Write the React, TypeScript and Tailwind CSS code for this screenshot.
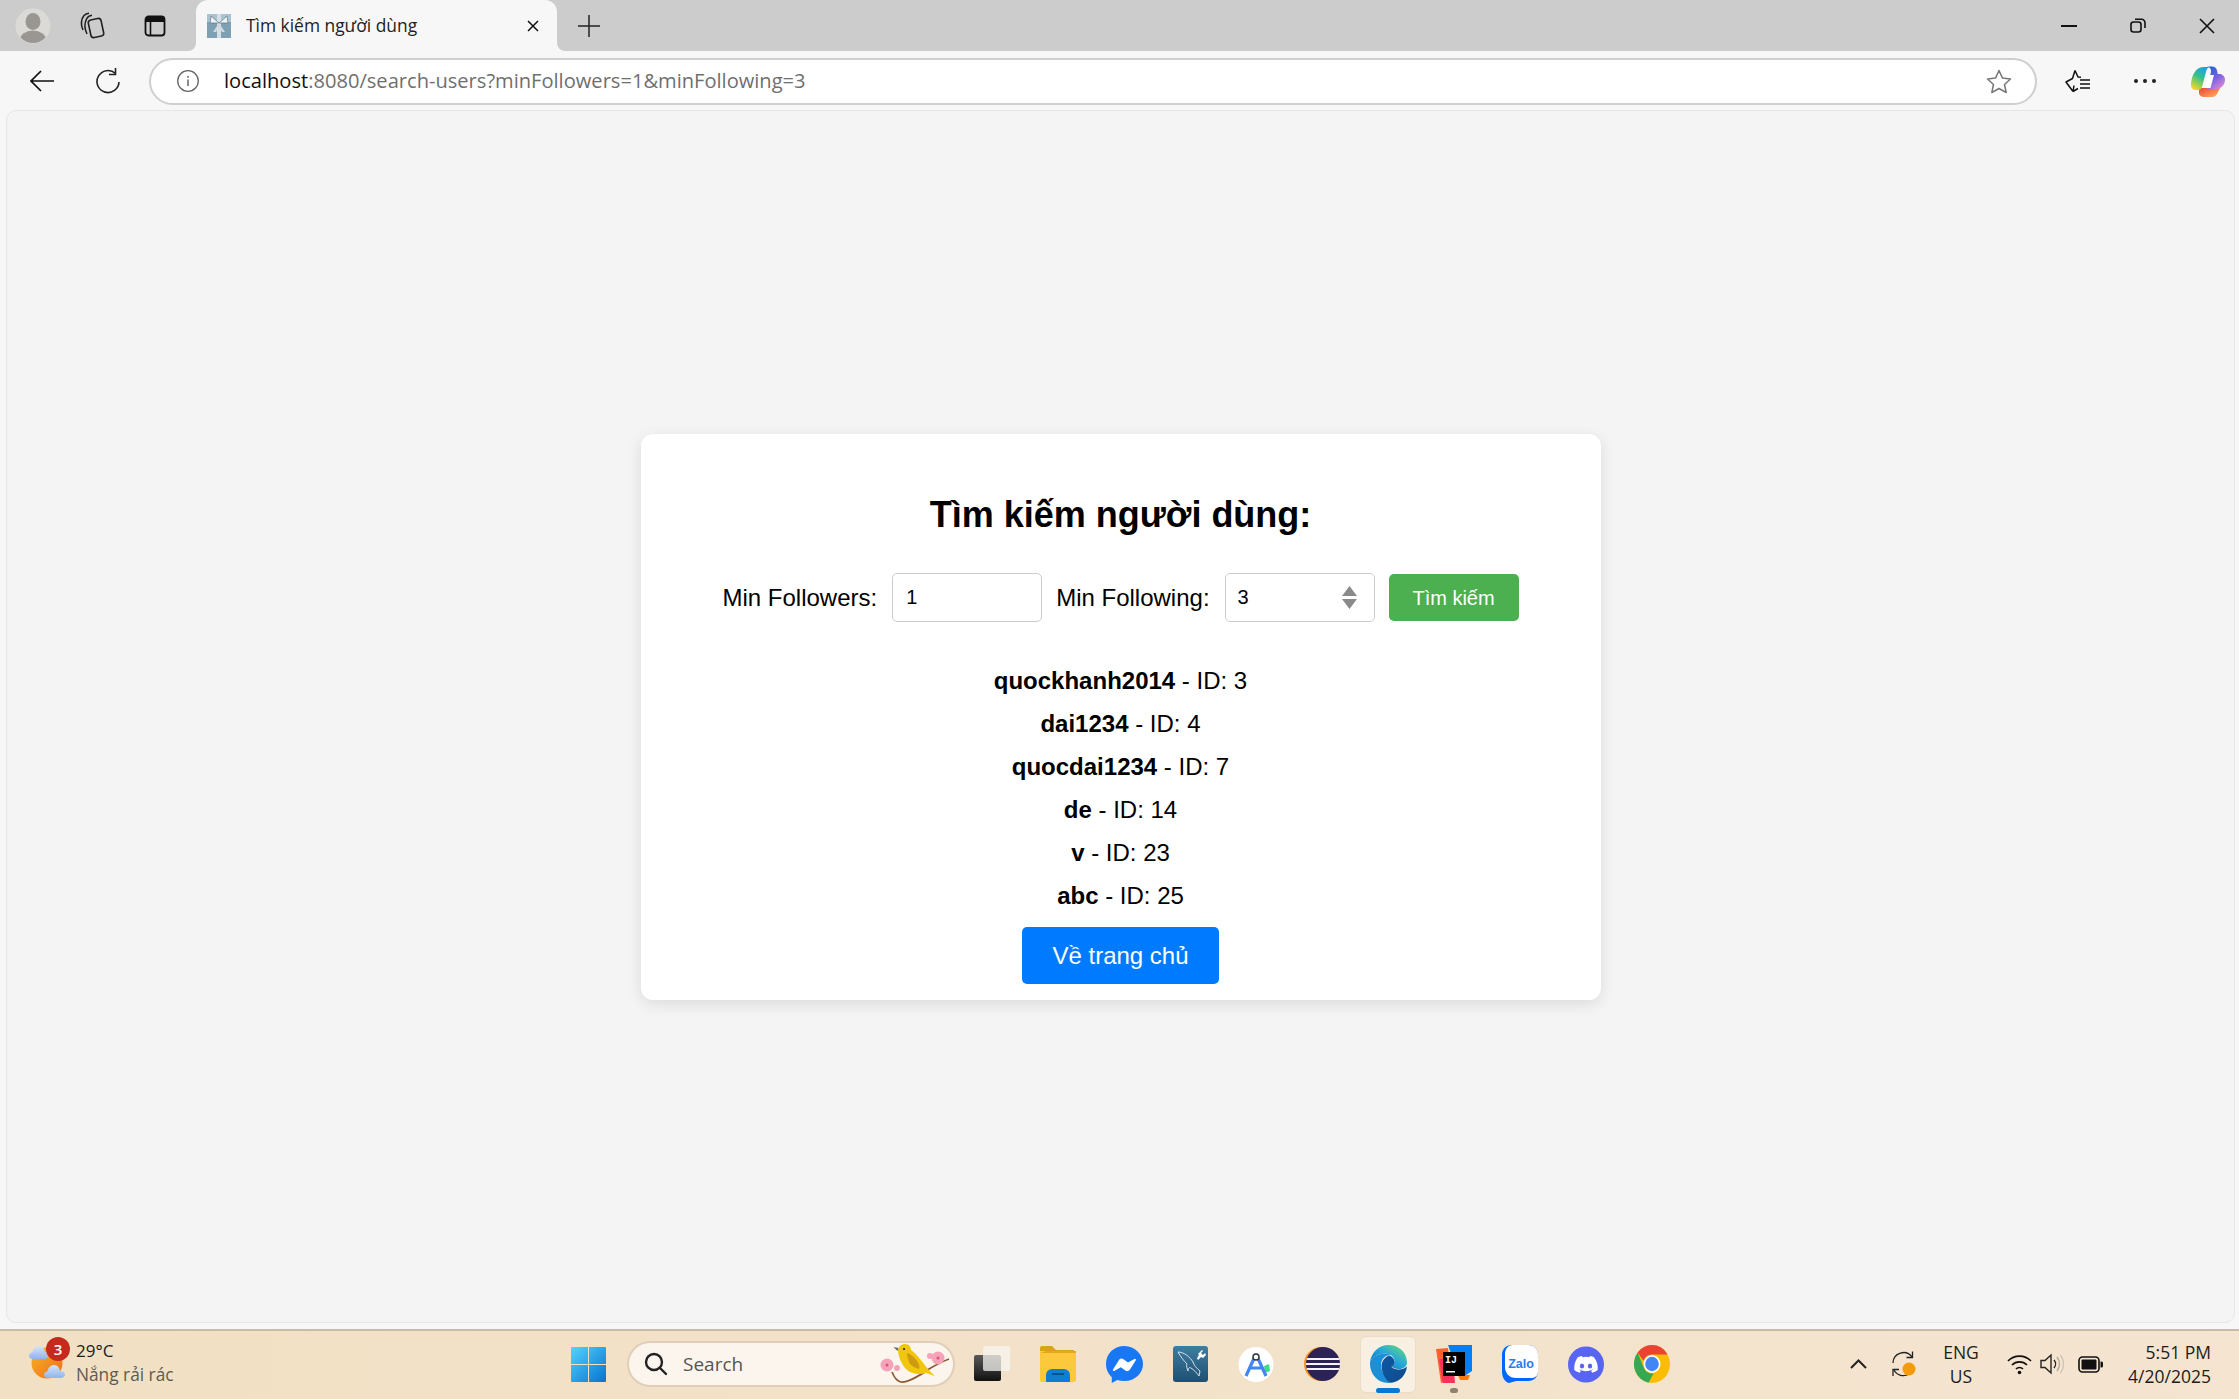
const sans = "font-['Liberation_Sans',Arial,sans-serif]";
const ui = "font-['Open_Sans','Noto_Sans',sans-serif]";

const users = [
  { name: "quockhanh2014", id: 3 },
  { name: "dai1234", id: 4 },
  { name: "quocdai1234", id: 7 },
  { name: "de", id: 14 },
  { name: "v", id: 23 },
  { name: "abc", id: 25 },
];

function Avatar() {
  return (
    <svg width="36" height="36" viewBox="0 0 36 36">
      <defs>
        <clipPath id="avatarClip">
          <circle cx="18" cy="18" r="17" />
        </clipPath>
      </defs>
      <circle cx="18" cy="18" r="17.5" fill="#dcdad6" />
      <g clipPath="url(#avatarClip)" fill="#9a9792">
        <ellipse cx="18" cy="13.5" rx="7.5" ry="8.5" />
        <ellipse cx="18" cy="32" rx="13" ry="9.5" />
      </g>
    </svg>
  );
}

function Collections() {
  return (
    <svg width="26" height="28" viewBox="0 0 26 28" fill="none" stroke="#222" strokeWidth="1.6">
      <rect x="10.5" y="7" width="13" height="18" rx="3" transform="rotate(-12 17 16)" />
      <path d="M8 22C5.500 17 5.500 11 7.500 7 8.500 5 10.500 3.500 13 3.300" />
      <path d="M4 18C1.500 13 2 7 5 3.500 6.500 2 8 1.500 10 1.300" />
    </svg>
  );
}

function VerticalTabs() {
  return (
    <svg width="24" height="24" viewBox="0 0 24 24" fill="none">
      <rect x="2.500" y="2.500" width="19" height="19" rx="3" stroke="#111" strokeWidth="1.800" />
      <path d="M3 3h18v5H3z" fill="#111" />
      <path d="M7.500 8v13" stroke="#111" strokeWidth="1.600" />
    </svg>
  );
}

function Favicon() {
  return (
    <svg width="24" height="26" viewBox="0 0 24 26">
      <rect x="0" y="1" width="24" height="24" fill="#7f9fb3" />
      <path d="M0 1h24v8H0z" fill="#a9c3d2" />
      <path d="M10 1h4v24h-4z" fill="#d5dfe5" />
      <path d="M12 10 4 3l-1 7zM12 10l8-7 1 7z" fill="#eef2f4" stroke="#5f7686" strokeWidth=".7" />
      <path d="M12 10 6 19h3l3-5 3 5h3z" fill="#cfdbe2" />
    </svg>
  );
}

function Copilot() {
  return (
    <svg width="34" height="31" viewBox="0 0 34 31">
      <defs>
        <linearGradient id="copA" x1="0.7" y1="0" x2="0.2" y2="1">
          <stop offset="0" stopColor="#1a9ff0" />
          <stop offset="0.45" stopColor="#35c08a" />
          <stop offset="1" stopColor="#f7d923" />
        </linearGradient>
        <linearGradient id="copB" x1="0.2" y1="0" x2="0.8" y2="1">
          <stop offset="0" stopColor="#1d63d8" />
          <stop offset="0.5" stopColor="#7b63e0" />
          <stop offset="1" stopColor="#e08ad6" />
        </linearGradient>
        <linearGradient id="copC" x1="0" y1="0" x2="1" y2="1">
          <stop offset="0" stopColor="#ee4433" />
          <stop offset="1" stopColor="#fdb46a" />
        </linearGradient>
      </defs>
      <path d="M8 22h21c-1 2-2 4-3 6-1 2-3 3-5 3h-8c-3 0-5-2-5-4z" fill="url(#copC)" />
      <path d="M12 1h8c-2 0-4 1-4.600 3.500L11 21c-.5 2-2 3-4 3H5c-3 0-5-2-5-5C0 10 5 1 12 1z" fill="url(#copA)" />
      <path d="M16 .5h5c2.500 0 4.500 1.200 5 4l.8 3.500h1.700c3 0 5.500 2.500 5.500 5.500 0 5.500-4 9.500-9 9.500H16l4-17c.5-2.500-1.500-5.500-4-5.500z" fill="url(#copB)" />
      <path d="M17.500 9h5.500l-3.500 13h-5.500z" fill="#fff" />
    </svg>
  );
}

function WeatherIcon() {
  return (
    <svg width="36" height="34" viewBox="0 0 36 34">
      <defs>
        <linearGradient id="sun" x1="0" y1="0" x2="1" y2="1">
          <stop offset="0" stopColor="#f9b323" />
          <stop offset="1" stopColor="#ec6e1e" />
        </linearGradient>
        <linearGradient id="cloud" x1="0" y1="0" x2="0" y2="1">
          <stop offset="0" stopColor="#d5e4fb" />
          <stop offset="1" stopColor="#8fb4ec" />
        </linearGradient>
      </defs>
      <circle cx="18" cy="18" r="15.500" fill="url(#sun)" />
      <path d="M3.500 14C1.500 14 0 12.500 0 10.700S1.500 7.500 3.300 7.400C4 4 6.500 1 10 1s5.500 3 6 6c2 0 3.500 1.500 3.500 3.500S18 14 16 14z" fill="url(#cloud)" />
      <path d="M18.500 33c-2 0-3.500-1.500-3.500-3.300s1.500-3.200 3.300-3.300C19 23 21.500 20 25 20s5.500 3 6 6c2.500 0 5 1.200 5 3.500S34 33 32 33z" fill="url(#cloud)" />
    </svg>
  );
}

function WindowsLogo() {
  return (
    <svg width="35" height="35" viewBox="0 0 35 35">
      <defs>
        <linearGradient id="win" x1="0" y1="0" x2="1" y2="1">
          <stop offset="0" stopColor="#55d2fb" />
          <stop offset="1" stopColor="#0573d2" />
        </linearGradient>
      </defs>
      <path d="M1 0h16v17H0V1a1 1 0 0 1 1-1zM18 0h16a1 1 0 0 1 1 1v16H18zM0 18h17v17H1a1 1 0 0 1-1-1zM18 18h17v16a1 1 0 0 1-1 1H18z" fill="url(#win)" />
    </svg>
  );
}

function Bird() {
  return (
    <svg width="72" height="40" viewBox="0 0 72 40">
      <path d="M12 28c2 5 4 9 9 10 6 1 20-7 28-13 5-3 12-7 20-10" fill="none" stroke="#8c5a32" strokeWidth="1.700" />
      <path d="M18 7c0-4 3-7 7-7 4 0 6 3 6 6 3 2 6 5 9 9 4 5 9 12 15 17l-9-3c-5 2-11 1-16-1-6-3-11-12-12-21z" fill="#f0c60f" />
      <path d="M27 9c4 1 8 5 10 8 2 3 3 6 2 8-4-1-8-3-10-7-1-3-2-6-2-9z" fill="#cf9a12" />
      <circle cx="24" cy="5" r="1.100" fill="#222" />
      <path d="M18.500 4l-5-1 4 4z" fill="#666" />
      <g fill="#f5a3b9">
        <circle cx="7" cy="21" r="6.500" />
        <circle cx="58" cy="14" r="6.500" />
        <circle cx="17" cy="24" r="3" />
        <circle cx="50" cy="12" r="3" />
      </g>
      <g fill="#d9557c">
        <circle cx="7" cy="21" r="1.500" />
        <circle cx="58" cy="14" r="1.500" />
      </g>
    </svg>
  );
}

function TaskView() {
  return (
    <svg width="36" height="36" viewBox="0 0 36 36">
      <defs>
        <linearGradient id="tvDark" x1="0" y1="0" x2="0" y2="1">
          <stop offset="0" stopColor="#5a5a5a" />
          <stop offset="1" stopColor="#111" />
        </linearGradient>
      </defs>
      <rect x="0" y="9" width="27" height="26" rx="2" fill="url(#tvDark)" />
      <rect x="9" y="0" width="27" height="25" rx="2" fill="#f7f4f0" fillOpacity=".75" />
    </svg>
  );
}

function Explorer() {
  return (
    <svg width="36" height="36" viewBox="0 0 36 36">
      <path d="M0 2a2 2 0 0 1 2-2h10l4 4h18v4H0z" fill="#dba316" />
      <path d="M0 5h34a2 2 0 0 1 2 2v27a2 2 0 0 1-2 2H2a2 2 0 0 1-2-2z" fill="#fdc93c" />
      <path d="M6 5h30v2H0z" fill="#e3a81c" />
      <path d="M6 36v-7a6 6 0 0 1 6-6h12a6 6 0 0 1 6 6v7z" fill="#0e7fd0" />
      <rect x="12" y="27" width="12" height="2" fill="#0a4e8e" />
    </svg>
  );
}

function Messenger() {
  return (
    <svg width="37" height="37" viewBox="0 0 37 37">
      <path d="M18.500 0C8 0 0 7.600 0 18c0 5.400 2.200 10 5.800 13.300V37l5.500-3c2.200.7 4.700 1 7.200 1C29 35 37 27.400 37 18S29 0 18.500 0z" fill="#1877f2" />
      <path d="M7 23.500 13 14c1-1.500 3-2 4.500-.8l4.500 3.400 6.500-3.700c.9-.5 1.900.5 1.300 1.400l-6 9.500c-1 1.500-3 2-4.500.8l-4.500-3.400-6.500 3.700c-.9.500-1.900-.5-1.300-1.400z" fill="#fff" />
    </svg>
  );
}

function MySql() {
  return (
    <svg width="35" height="36" viewBox="0 0 35 36">
      <defs>
        <linearGradient id="mysql" x1="0" y1="0" x2="0" y2="1">
          <stop offset="0" stopColor="#3f7ea3" />
          <stop offset="1" stopColor="#1f4f70" />
        </linearGradient>
      </defs>
      <rect width="35" height="36" rx="3" fill="url(#mysql)" />
      <path d="M5 6c6 0 12 5 15 10 1 3 3 6 7 9l-1 5c-2-3-5-6-8-8-2-1-3 0-3 3-1-3-2-5-1-7C11 15 7 10 5 6z" fill="none" stroke="#d6e2ea" strokeWidth="1" />
      <path d="M25 8l4-4 1 1-2 2 2 2 2-2 1 2-3 3-2-1-3 3-1-2 2-3z" fill="#fff" />
    </svg>
  );
}

function AndroidStudio() {
  return (
    <svg width="36" height="37" viewBox="0 0 36 37">
      <circle cx="18" cy="18.500" r="17.500" fill="#fff" />
      <path d="M26 20l5-2 1 7-5 2z" fill="#3ddc84" />
      <path d="M18 8 8 30M18 8l10 22M11 22h14" stroke="#4285f4" strokeWidth="3.200" fill="none" />
      <circle cx="18" cy="11" r="3" fill="#fff" stroke="#333" strokeWidth="1.400" />
    </svg>
  );
}

function Eclipse() {
  return (
    <svg width="36" height="36" viewBox="0 0 36 36">
      <defs>
        <clipPath id="eclipseClip">
          <circle cx="19" cy="18" r="17" />
        </clipPath>
      </defs>
      <circle cx="17" cy="18" r="17" fill="#f7941e" />
      <circle cx="19" cy="18" r="17" fill="#2c2255" />
      <g clipPath="url(#eclipseClip)" fill="#f4f2fa">
        <rect x="0" y="12" width="36" height="2" />
        <rect x="0" y="17" width="36" height="2" />
        <rect x="0" y="22" width="36" height="2" />
      </g>
    </svg>
  );
}

function Edge() {
  return (
    <svg width="37" height="38" viewBox="0 0 37 38">
      <defs>
        <linearGradient id="edgeA" x1="0" y1="1" x2="1" y2="0">
          <stop offset="0" stopColor="#0a62b8" />
          <stop offset="0.55" stopColor="#28a9d8" />
          <stop offset="1" stopColor="#6de06a" />
        </linearGradient>
        <linearGradient id="edgeB" x1="0" y1="0" x2="1" y2="1">
          <stop offset="0" stopColor="#0c59a4" />
          <stop offset="1" stopColor="#114a8b" />
        </linearGradient>
      </defs>
      <path d="M18.500 0C29 0 37 7.500 37 17.500c0 4-3.500 6.500-8 6.500-3.500 0-7-1-7.500-3 1.800-1 3-2.500 3-4.500 0-4-3.500-8-9-8C8 8.500 2 12 0 17 1.500 7 9 0 18.500 0z" fill="url(#edgeA)" />
      <path d="M0 17c2-5 8-8.500 15.500-8.500 2 0 3.500.5 5 1.500-5 0-9.500 4-9.500 10 0 7 5 14 13 17-2 .7-4 1-6 1C8 38 0 29 0 19z" fill="#1d8fd6" />
      <path d="M11.500 21c0-5 4-9.500 8-10.500 2.500 1 5 3.500 5 6.500 0 2-1.200 3.500-3 4.500.5 2 4 3 7.500 3 3 0 6-1 8-3-1 9-8 16-16 16-4 0-9.500-9-9.500-16.500z" fill="url(#edgeB)" />
    </svg>
  );
}

function IntelliJ() {
  return (
    <svg width="36" height="38" viewBox="0 0 36 38">
      <path d="M0 4l12-1 4 33-11 2z" fill="#f9622f" />
      <path d="M3 14h14l2 24H7z" fill="#fe315d" />
      <path d="M12 0h24v26l-12 8z" fill="#087cfa" />
      <path d="M22 30h12l-2 5H24z" fill="#f97a12" />
      <rect x="7" y="7" width="22" height="24" fill="#000" />
      <text x="9" y="18" fill="#fff" fontSize="10" fontFamily="Liberation Mono, monospace" fontWeight="700">IJ</text>
      <rect x="10" y="26" width="9" height="1.500" fill="#fff" />
    </svg>
  );
}

function Zalo() {
  return (
    <svg width="36" height="38" viewBox="0 0 36 38">
      <path d="M10 0h16c6 0 10 4 10 10v16c0 6-4 10-10 10H14l-7 2c-4-1-7-5-7-12V10C0 4 4 0 10 0z" fill="#0068ff" />
      <path d="M11 0h15c6 0 10 4 10 10v16c0 4-2 6-5 7H14C7 33 3 28 3 22V9c0-5 3-9 8-9z" fill="#fff" />
      <text x="19" y="23" textAnchor="middle" fill="#2a7bf3" fontSize="12.500" fontWeight="700" fontFamily="Liberation Sans, sans-serif">Zalo</text>
    </svg>
  );
}

function Discord() {
  return (
    <svg width="36" height="37" viewBox="0 0 36 37">
      <circle cx="18" cy="18.500" r="18" fill="#5865f2" />
      <path d="M26.500 11.500A20 20 0 0 0 22 10l-.6 1.200a17 17 0 0 0-6.800 0L14 10c-1.600.3-3.100.8-4.500 1.500C6.700 15.700 6 20 6.300 24c1.800 1.400 3.700 2.200 5.500 2.800l1.200-2a11 11 0 0 1-1.900-1c.2-.1.300-.2.500-.4a13 13 0 0 0 12.800 0l.5.400c-.6.400-1.200.7-1.900 1l1.200 2c1.800-.6 3.700-1.400 5.500-2.800.4-4.700-.7-9-3.700-12.500z" fill="#fff" />
      <ellipse cx="14" cy="20" rx="2.200" ry="2.500" fill="#5865f2" />
      <ellipse cx="22" cy="20" rx="2.200" ry="2.500" fill="#5865f2" />
    </svg>
  );
}

function Chrome() {
  return (
    <svg width="36" height="38" viewBox="0 0 36 36" preserveAspectRatio="none">
      <circle cx="18" cy="18" r="18" fill="#fbbc04" />
      <path d="M18 0a18 18 0 0 1 15.600 9H18a9 9 0 0 0-8.500 6L3.600 7.200A18 18 0 0 1 18 0z" fill="#ea4335" />
      <path d="M3.600 7.200 10.200 22.500a9 9 0 0 0 9.300 4.400L14.500 35.700A18 18 0 0 1 3.600 7.200z" fill="#34a853" />
      <circle cx="18" cy="18" r="8.500" fill="#fff" />
      <circle cx="18" cy="18" r="6.800" fill="#4285f4" />
    </svg>
  );
}

function Sync() {
  return (
    <svg width="28" height="28" viewBox="0 0 28 28" fill="none">
      <path d="M2 13A10.500 10.500 0 0 1 21 7" stroke="#222" strokeWidth="1.300" />
      <path d="M21.500 1.500V7.500H15.500" stroke="#222" strokeWidth="1.300" />
      <path d="M18 24A10.500 10.500 0 0 1 3 20" stroke="#222" strokeWidth="1.300" />
      <path d="M2 26V19.500H8" stroke="#222" strokeWidth="1.300" />
      <circle cx="18" cy="19" r="6.500" fill="#f59a0c" />
    </svg>
  );
}

function TaskItem({ children, active, running }: { children: React.ReactNode; active?: boolean; running?: boolean }) {
  return (
    <div className={"relative flex h-[57px] w-[66px] items-center justify-center"}>
      <div className={active ? "flex h-[57px] w-[56px] items-center justify-center rounded-md border border-[#eadcc8] bg-[#f8f0e3]" : "flex items-center justify-center"}>
        {children}
      </div>
      {active && <div className="absolute bottom-0 left-[21px] h-[5px] w-[24px] rounded-full bg-[#0a78d4]" />}
      {running && <div className="absolute bottom-0 left-[29px] h-[5px] w-[8px] rounded-full bg-[#8e8272]" />}
    </div>
  );
}

export default function App() {
  return (
    <div className={`flex h-[1399px] w-[2239px] flex-col overflow-hidden bg-[#f7f7f7] ${ui}`}>
      {/* tab strip */}
      <div className="flex h-[51px] shrink-0 items-center bg-[#cccccc] pl-[15px]">
        <Avatar />
        <div className="ml-[28px]"><Collections /></div>
        <div className="ml-[38px]"><VerticalTabs /></div>
        <div className="relative ml-[29px] flex h-[51px] w-[361px] items-center rounded-t-[12px] bg-[#f7f7f7] pl-[11px]">
          <svg className="absolute bottom-0 left-[-8px]" width="8" height="8" viewBox="0 0 8 8">
            <path d="M8 0v8H0a8 8 0 0 0 8-8z" fill="#f7f7f7" />
          </svg>
          <Favicon />
          <span className="ml-[15px] text-[17.4px] leading-none text-[#222]">Tìm kiếm người dùng</span>
          <svg className="absolute right-[18px] top-[20px]" width="12" height="12" viewBox="0 0 12 12" stroke="#111" strokeWidth="1.500">
            <path d="M1 1l10 10M11 1 1 11" />
          </svg>
          <svg className="absolute bottom-0 right-[-8px]" width="8" height="8" viewBox="0 0 8 8">
            <path d="M0 0v8h8a8 8 0 0 1-8-8z" fill="#f7f7f7" />
          </svg>
        </div>
        <svg className="ml-[21px]" width="22" height="22" viewBox="0 0 22 22" stroke="#222" strokeWidth="1.500">
          <path d="M11 0v22M0 11h22" />
        </svg>
        <div className="ml-auto flex items-center">
          <svg width="16" height="2" viewBox="0 0 16 2"><path d="M0 0h16v2H0z" fill="#111" /></svg>
          <svg className="ml-[53px]" width="16" height="15" viewBox="0 0 16 15" fill="none" stroke="#111" strokeWidth="1.600">
            <rect x="1" y="4" width="10" height="10" rx="2.500" />
            <path d="M5 1.200h6.500A3.500 3.500 0 0 1 15 4.700V10" />
          </svg>
          <svg className="ml-[53px] mr-[24px]" width="16" height="16" viewBox="0 0 16 16" stroke="#111" strokeWidth="1.600">
            <path d="M1 1l14 14M15 1 1 15" />
          </svg>
        </div>
      </div>

      {/* toolbar */}
      <div className="flex h-[59px] shrink-0 items-center pl-[30px] pt-[1px]">
        <svg width="24" height="24" viewBox="0 0 24 24" fill="none" stroke="#111" strokeWidth="1.700">
          <path d="M24 12H1M11 2 1 12l10 10" />
        </svg>
        <svg className="ml-[41px]" width="25" height="26" viewBox="0 0 25 26" fill="none" stroke="#222" strokeWidth="1.600">
          <path d="M20.500 5.500A11 11 0 1 0 24 14" />
          <path d="M20.500 0v6.500H14" />
        </svg>
        <div className="ml-[29px] flex h-[47px] w-[1888px] items-center rounded-full border-2 border-[#cfcfcf] bg-white pl-[26px]">
          <svg width="22" height="22" viewBox="0 0 22 22" fill="none" stroke="#666" strokeWidth="1.300">
            <circle cx="11" cy="11" r="10.300" />
            <path d="M11 9.500V16" strokeWidth="1.500" />
            <path d="M11 6v1.800" strokeWidth="1.500" />
          </svg>
          <span className="ml-[25px] text-[20.100px] leading-none text-[#111]">
            localhost<span className="text-[#6f6f6f]">:8080/search-users?minFollowers=1&amp;minFollowing=3</span>
          </span>
          <svg className="ml-auto mr-[23px]" width="26" height="25" viewBox="0 0 26 25" fill="none" stroke="#777" strokeWidth="1.500" strokeLinejoin="round">
            <path d="M13 1.500l3.500 7.600 8 .9-6 5.500 1.700 8L13 19.500l-7.200 4 1.700-8-6-5.500 8-.9z" />
          </svg>
        </div>
        <svg className="ml-[28px]" width="26" height="25" viewBox="0 0 26 25" fill="none" stroke="#111" strokeWidth="1.500" strokeLinejoin="round">
          <path d="M10 1.500l3 6.500 3 .3M8 22.500 1 13l6.500-3.500L10 1.500M8 22.500l1-6M8 22.500l5-3" />
          <path d="M15 11h10M15 15h10M15 19h10" />
        </svg>
        <svg className="ml-[43px]" width="22" height="4" viewBox="0 0 22 4" fill="#222">
          <circle cx="2" cy="2" r="2" /><circle cx="11" cy="2" r="2" /><circle cx="20" cy="2" r="2" />
        </svg>
        <div className="ml-[35px]"><Copilot /></div>
      </div>

      {/* page */}
      <div className={`ml-[6px] mr-[4px] flex h-[1213px] shrink-0 items-start justify-center rounded-[10px] border border-[#e6e6e6] bg-[#f4f4f4] ${sans}`}>
        <div className="mt-[323px] flex h-[566px] w-[960px] flex-col items-center rounded-[12px] bg-white pt-[60px] text-black shadow-[0_4px_15px_rgba(0,0,0,0.1)]">
          <h2 className="text-[36px] leading-[41px] font-bold">Tìm kiếm người dùng:</h2>
          <form className="mt-[38px] flex h-[49px] items-center">
            <label className="text-[24px]">Min Followers:</label>
            <input
              readOnly
              value="1"
              className="ml-[15px] h-[49px] w-[150px] rounded-[5px] border border-[#cccccc] px-[13px] text-[20px] outline-none"
            />
            <label className="ml-[14px] text-[24px]">Min Following:</label>
            <div className="relative ml-[15px]">
              <input
                readOnly
                value="3"
                className="h-[49px] w-[150px] rounded-[5px] border border-[#cccccc] px-[12px] text-[20px] outline-none"
              />
              <svg className="absolute right-[18px] top-[13px]" width="15" height="23" viewBox="0 0 15 23" fill="#8a8a8a">
                <path d="M7.500 0 15 10H0zM0 13h15l-7.500 10z" />
              </svg>
            </div>
            <button type="button" className="ml-[14px] h-[47px] w-[130px] rounded-[5px] bg-[#4caf50] text-[20px] text-white">
              Tìm kiếm
            </button>
          </form>
          <ul className="mt-[37px] flex flex-col items-center">
            {users.map((u) => (
              <li key={u.id} className="h-[43px] text-[24px] leading-[43px]">
                <strong>{u.name}</strong> - ID: {u.id}
              </li>
            ))}
          </ul>
          <a className="mt-[10px] flex h-[57px] w-[197px] items-center justify-center rounded-[5px] bg-[#007bff] text-[24px] text-white">
            Về trang chủ
          </a>
        </div>
      </div>

      {/* taskbar */}
      <div className="mt-[6px] flex h-[70px] shrink-0 items-center border-t-2 border-[#c8bba8] bg-gradient-to-r from-[#f1e0c3] to-[#f5e4d0] pb-[2px]">
        <div className="relative ml-[29px] mb-[4px]">
          <WeatherIcon />
          <div className="absolute left-[17px] top-[-8px] flex h-[24px] w-[24px] items-center justify-center rounded-full bg-[#c42b1c] text-[15px] font-semibold text-white">3</div>
        </div>
        <div className="ml-[11px] mb-[2px] flex w-[120px] flex-col">
          <span className="text-[17px] leading-[24px] text-[#1c1c1c]">29°C</span>
          <span className="text-[17.300px] leading-[24px] text-[#5e5a52]">Nắng rải rác</span>
        </div>
        <div className="ml-[375px]"><WindowsLogo /></div>
        <div className="ml-[21px] flex h-[46px] w-[328px] items-center rounded-full border-2 border-[#dfcfb9] bg-[#fbf5ed] pl-[15px]">
          <svg width="24" height="24" viewBox="0 0 24 24" fill="none" stroke="#222" strokeWidth="2.400">
            <circle cx="10" cy="10" r="8" />
            <path d="M16 16l6 6" strokeLinecap="round" />
          </svg>
          <span className="ml-[15px] text-[19px] text-[#555]">Search</span>
          <div className="ml-auto mr-[1px]"><Bird /></div>
        </div>
        <div className="ml-[4px] flex items-center">
          <TaskItem><TaskView /></TaskItem>
          <TaskItem><Explorer /></TaskItem>
          <TaskItem><Messenger /></TaskItem>
          <TaskItem><MySql /></TaskItem>
          <TaskItem><AndroidStudio /></TaskItem>
          <TaskItem><Eclipse /></TaskItem>
          <TaskItem active><Edge /></TaskItem>
          <TaskItem running><IntelliJ /></TaskItem>
          <TaskItem><Zalo /></TaskItem>
          <TaskItem><Discord /></TaskItem>
          <TaskItem><Chrome /></TaskItem>
        </div>
        <div className="ml-auto flex items-center pr-[28px]">
          <svg width="17" height="10" viewBox="0 0 17 10" fill="none" stroke="#222" strokeWidth="2">
            <path d="M1 9l7.500-7.500L16 9" />
          </svg>
          <div className="ml-[24px]"><Sync /></div>
          <div className="ml-[20px] flex w-[44px] flex-col items-center text-[17.500px] leading-[24px] text-[#1c1c1c]">
            <span>ENG</span>
            <span>US</span>
          </div>
          <svg className="ml-[24px]" width="25" height="21" viewBox="0 0 25 21" fill="none" stroke="#111" strokeWidth="1.700">
            <path d="M1 7a16 16 0 0 1 23 0M5 11a10.500 10.500 0 0 1 15 0M9 15a5 5 0 0 1 7 0" />
            <circle cx="12.500" cy="18.500" r="1.800" fill="#111" stroke="none" />
          </svg>
          <svg className="ml-[8px]" width="24" height="22" viewBox="0 0 24 22" fill="none" stroke="#222" strokeWidth="1.400">
            <path d="M1 7.500h4L11 2v18l-6-5.500H1z" />
            <path d="M14 7a6 6 0 0 1 0 8" />
            <path d="M17 4a11 11 0 0 1 0 14" stroke="#b3aa9c" />
            <path d="M20.500 2a15 15 0 0 1 0 18" stroke="#cfc6b6" />
          </svg>
          <svg className="ml-[14px]" width="25" height="17" viewBox="0 0 25 17">
            <rect x="1" y="1" width="20" height="15" rx="3.500" fill="none" stroke="#111" strokeWidth="1.600" />
            <rect x="3.500" y="3.500" width="15" height="10" rx="1" fill="#111" />
            <path d="M22.500 5.500h1a1.500 1.500 0 0 1 1.500 1.500v3a1.500 1.500 0 0 1-1.500 1.500h-1z" fill="#111" />
          </svg>
          <div className="ml-[21px] flex w-[87px] flex-col items-end whitespace-nowrap text-[17.500px] leading-[24px] text-[#1c1c1c]">
            <span>5:51 PM</span>
            <span>4/20/2025</span>
          </div>
        </div>
      </div>
    </div>
  );
}
